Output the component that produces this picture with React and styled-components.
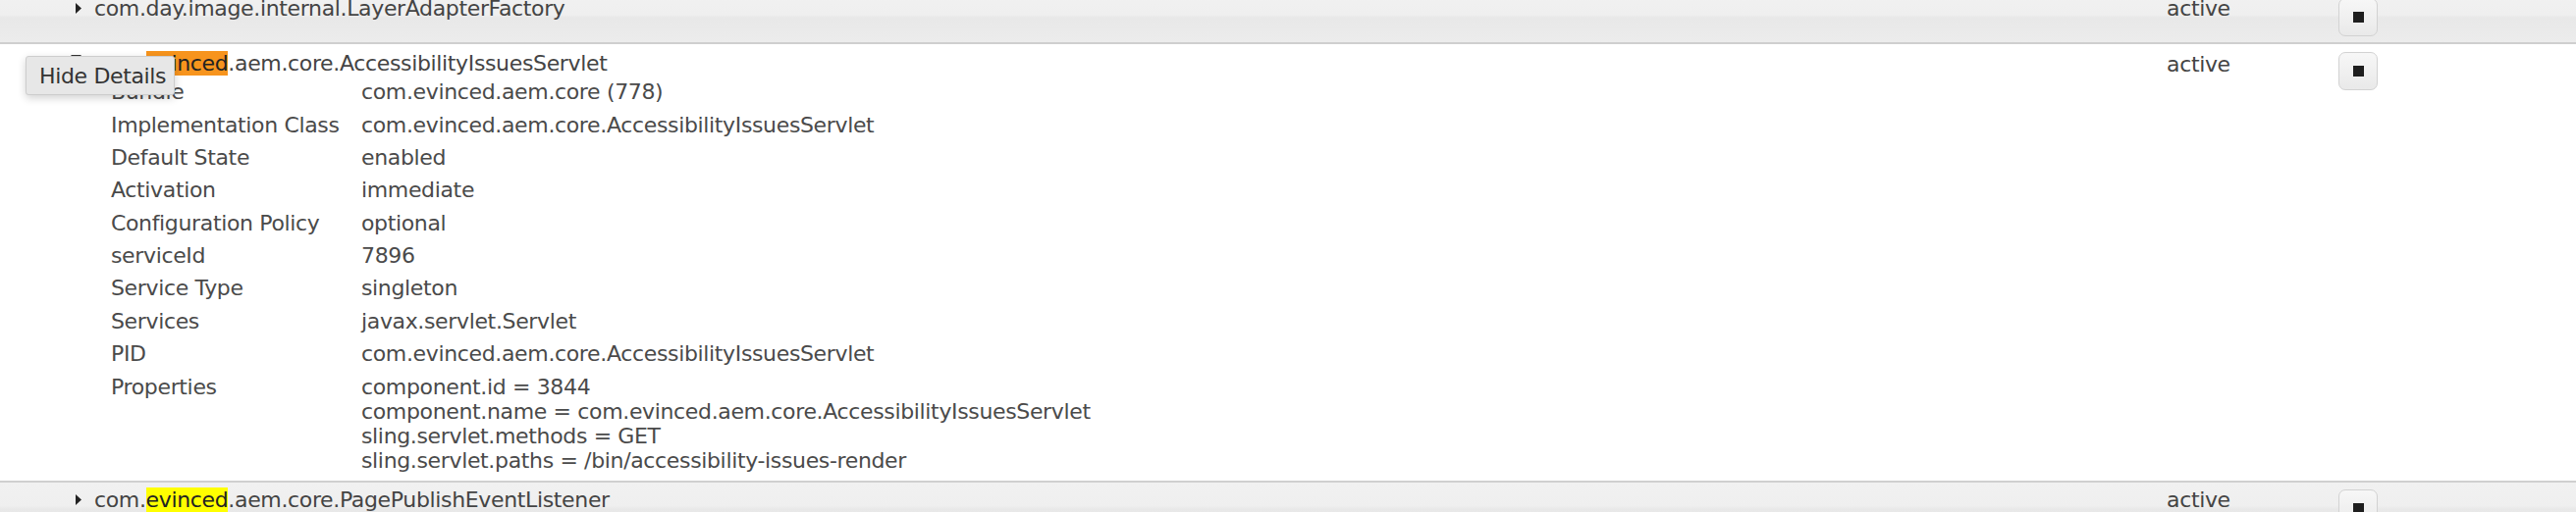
import React from 'react';
import styled, { createGlobalStyle } from 'styled-components';

const GlobalStyle = createGlobalStyle`
  html, body {
    margin: 0;
    padding: 0;
    background: #ffffff;
  }
  body {
    font-family: "DejaVu Sans", Verdana, sans-serif;
    font-size: 22px;
    letter-spacing: -0.35px;
    color: #444444;
    overflow: hidden;
  }
`;

const List = styled.div`
  margin-top: -9px;
`;

const Row = styled.div`
  position: relative;
  display: grid;
  grid-template-columns: 1fr 175px 242px;
  border-bottom: 2px solid #cfcfcf;
  background: ${(p) => (p.$open
    ? '#ffffff'
    : 'linear-gradient(#f1f1f1 0%, #efefef 46%, #e8e8e8 52%, #ececec 100%)')};
  padding-bottom: ${(p) => (p.$open ? '4px' : '6px')};
`;

const NameCell = styled.div`
  padding: ${(p) => (p.$open ? '8px 0 0 72px' : '5px 0 0 72px')};
`;

const Title = styled.div`
  display: flex;
  align-items: ${(p) => (p.$open ? 'flex-start' : 'center')};
  line-height: ${(p) => (p.$open ? '24px' : '25px')};
  color: #444;
`;

const Toggle = styled.span`
  display: flex;
  justify-content: flex-end;
  width: 11px;
  margin-right: 13px;
  margin-top: ${(p) => (p.$open ? '3px' : '0')};
  flex-shrink: 0;
`;

const Mark = styled.span`
  background: ${(p) => (p.$current ? '#f7941d' : '#ffff00')};
  color: #222;
`;

const StatusCell = styled.div`
  padding-top: ${(p) => (p.$open ? '8px' : '5px')};
  line-height: 25px;
`;

const ActionCell = styled.div`
  padding-top: ${(p) => (p.$open ? '8px' : '7px')};
`;

const StopButton = styled.button`
  width: 40px;
  height: 39px;
  display: flex;
  align-items: center;
  justify-content: center;
  padding: 0;
  border: 1.5px solid #d2d2d2;
  border-radius: 7px;
  background: linear-gradient(#f7f7f7, #e9e9e9);
  cursor: pointer;

  &::before {
    content: '';
    display: block;
    width: 11px;
    height: 11px;
    background: #1e1e1e;
  }
`;

const Details = styled.div`
  display: grid;
  grid-template-columns: 255px 1fr;
  margin-left: 41px;
  line-height: 25px;
  color: #4a4a4a;
`;

const Label = styled.div`
  padding: 4.2px 0;
`;

const Value = styled.div`
  padding: 4.2px 0;
`;

const Tooltip = styled.div`
  position: absolute;
  left: 26px;
  top: 12px;
  width: 152px;
  height: 40px;
  box-sizing: border-box;
  padding-left: 13px;
  display: flex;
  align-items: center;
  background: #e7e7e7;
  border: 1px solid #cdcdcd;
  border-radius: 3px;
  box-shadow: 0 3px 8px rgba(0, 0, 0, 0.18);
  color: #333;
  line-height: 25px;
`;

const RightArrow = () => (
  <svg width="6" height="11" viewBox="0 0 6 11">
    <path d="M0 0 L6 5.5 L0 11 Z" fill="#222" />
  </svg>
);

const DownArrow = () => (
  <svg width="11" height="6" viewBox="0 0 11 6">
    <path d="M0 0 L11 0 L5.5 6 Z" fill="#333" />
  </svg>
);

const details = [
  ['Bundle', 'com.evinced.aem.core (778)'],
  ['Implementation Class', 'com.evinced.aem.core.AccessibilityIssuesServlet'],
  ['Default State', 'enabled'],
  ['Activation', 'immediate'],
  ['Configuration Policy', 'optional'],
  ['serviceId', '7896'],
  ['Service Type', 'singleton'],
  ['Services', 'javax.servlet.Servlet'],
  ['PID', 'com.evinced.aem.core.AccessibilityIssuesServlet'],
  ['Properties', [
    'component.id = 3844',
    'component.name = com.evinced.aem.core.AccessibilityIssuesServlet',
    'sling.servlet.methods = GET',
    'sling.servlet.paths = /bin/accessibility-issues-render',
  ]],
];

const ComponentRow = ({ name, match, open, current, children }) => {
  let title = name;
  if (match) {
    const i = name.indexOf(match);
    title = (
      <>
        {name.slice(0, i)}
        <Mark $current={current}>{match}</Mark>
        {name.slice(i + match.length)}
      </>
    );
  }
  return (
    <Row $open={open}>
      <NameCell $open={open}>
        <Title $open={open}>
          <Toggle $open={open}>{open ? <DownArrow /> : <RightArrow />}</Toggle>
          <span>{title}</span>
        </Title>
        {children}
      </NameCell>
      <StatusCell $open={open}>active</StatusCell>
      <ActionCell $open={open}>
        <StopButton aria-label="Deactivate" />
      </ActionCell>
      {open && <Tooltip>Hide Details</Tooltip>}
    </Row>
  );
};

const App = () => (
  <>
    <GlobalStyle />
    <List>
      <ComponentRow name="com.day.image.internal.LayerAdapterFactory" />
      <ComponentRow
        name="com.evinced.aem.core.AccessibilityIssuesServlet"
        match="evinced"
        current
        open
      >
        <Details>
          {details.map(([label, value]) => (
            <React.Fragment key={label}>
              <Label>{label}</Label>
              <Value>
                {Array.isArray(value)
                  ? value.map((line) => <div key={line}>{line}</div>)
                  : value}
              </Value>
            </React.Fragment>
          ))}
        </Details>
      </ComponentRow>
      <ComponentRow
        name="com.evinced.aem.core.PagePublishEventListener"
        match="evinced"
      />
    </List>
  </>
);

export default App;
